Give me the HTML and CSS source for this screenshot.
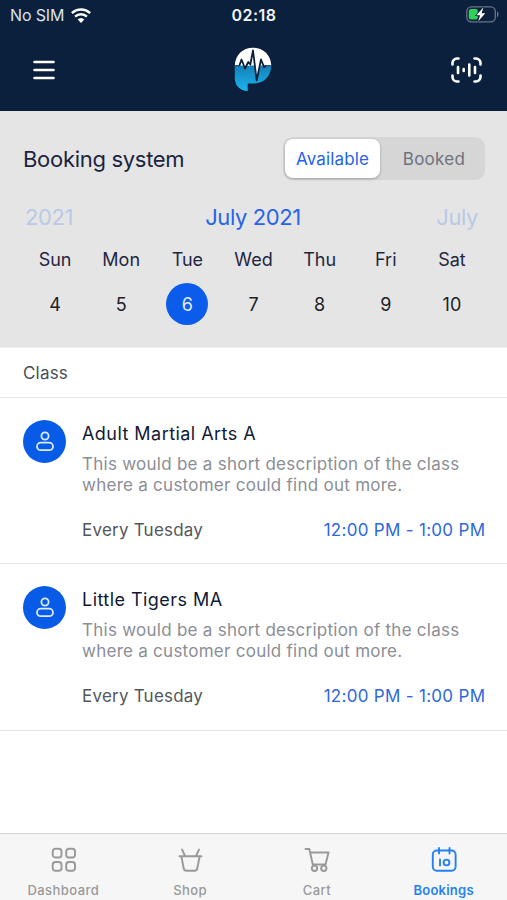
FILE: index.html
```html
<!DOCTYPE html>
<html lang="en">
<head>
<meta charset="utf-8">
<meta name="viewport" content="width=device-width, initial-scale=1">
<title>Booking system</title>
<link rel="stylesheet" href="styles.css">
</head>
<body>
<div class="app">
  <header class="header">
    <div class="status">
      <div class="carrier"><span>No SIM</span>
        <svg width="20" height="15" viewBox="0 0 20 15" fill="none" stroke="#fff" stroke-width="2.5"><path d="M.9 5.2a13 13 0 0 1 18.2 0M4.1 8.7a8.5 8.5 0 0 1 11.8 0"/><path d="M6.7 11.5a4.8 4.8 0 0 1 6.6 0L10 14.9z" fill="#fff" stroke="none"/></svg>
      </div>
      <span class="clock">02:18</span>
      <svg class="battery" width="33" height="17" viewBox="0 0 33 17"><rect x=".8" y=".8" width="28.5" height="15" rx="4.5" fill="none" stroke="#68768a" stroke-width="1.3"/><path d="M31 5.5c2 .8 2 5 0 5.800z" fill="#68768a"/><rect x="2.800" y="3" width="9" height="10.600" rx="2" fill="#30d158"/><path d="M17.500 1.300 10.400 9.300h3.700l-2 6.300 7.200-8.400h-3.700z" fill="#fff" stroke="#0a203c" stroke-width="1.400" paint-order="stroke"/></svg>
    </div>
    <div class="nav">
      <svg width="22" height="20" viewBox="0 0 22 20" stroke="#fff" stroke-width="2.600" stroke-linecap="round"><path d="M1.500 2h19M1.500 10h19M1.500 18h19"/></svg>
      <svg class="logo" width="38" height="44" viewBox="0 0 38 44"><defs><linearGradient id="g" x1="0" y1="0" x2="0" y2="1"><stop offset="0" stop-color="#1480b8"/><stop offset="1" stop-color="#1cb4f0"/></linearGradient></defs><path d="M.8 19C1 8 8.500.7 19 .7S37 8 37.300 19z" fill="#fff"/><path d="M.8 18.500h36.500C37 29.500 30 36.500 19 36.500h-5.300V44C6 43.500.8 39 .8 31z" fill="url(#g)"/><path d="M6 18 7.500 14 10.500 21.500 14 15.500l1.800 3zM19.800 16 22.900 33 27 17z" fill="#fff"/><path d="M5.300 18.700 7.500 12.500 11 21.500 14.300 15l2 2.500L19 3.500 22.700 33.500 27 12.500l3.200 7.800 1.600-1.700" fill="none" stroke="#0a203c" stroke-width="1.800" stroke-linejoin="round"/><path d="M.8 18.700H5.500M31.500 18.700h5.800" stroke="#0a203c" stroke-width=".8"/></svg>
      <svg width="31" height="26" viewBox="0 0 31 26" fill="none" stroke="#fff" stroke-width="2.600" stroke-linecap="round"><path d="M7.500 1.500H6A4.500 4.500 0 0 0 1.500 6v1.500M23.500 1.500H25A4.500 4.500 0 0 1 29.500 6v1.500M7.500 24.500H6A4.500 4.500 0 0 1 1.500 20v-1.500M23.500 24.500H25a4.500 4.500 0 0 0 4.500-4.500v-1.500M7 10v6M12.700 12v2M18.300 7.500v11M24 10v6"/></svg>
    </div>
  </header>

  <section class="calendar">
    <div class="heading">
      <h1>Booking system</h1>
      <div class="segment"><span class="seg on">Available</span><span class="seg">Booked</span></div>
    </div>
    <div class="months"><span class="dim">2021</span><span class="current">July 2021</span><span class="dim next">July</span></div>
    <div class="week">
      <span>Sun</span><span>Mon</span><span>Tue</span><span>Wed</span><span>Thu</span><span>Fri</span><span>Sat</span>
    </div>
    <div class="week dates">
      <span>4</span><span>5</span><span class="selected">6</span><span>7</span><span>8</span><span>9</span><span>10</span>
    </div>
  </section>

  <main class="classes">
    <h2>Class</h2>
    <article class="item">
      <div class="avatar"><svg width="18" height="20" viewBox="0 0 18 20" fill="none" stroke="#dcecff" stroke-width="1.800"><circle cx="9" cy="5" r="3.600"/><rect x="1" y="11.700" width="16" height="7.400" rx="3.700"/></svg></div>
      <div class="body">
        <h3>Adult Martial Arts A</h3>
        <p>This would be a short description of the class<br>where a customer could find out more.</p>
        <div class="when"><span>Every Tuesday</span><span class="time">12:00 PM - 1:00 PM</span></div>
      </div>
    </article>
    <article class="item">
      <div class="avatar"><svg width="18" height="20" viewBox="0 0 18 20" fill="none" stroke="#dcecff" stroke-width="1.800"><circle cx="9" cy="5" r="3.600"/><rect x="1" y="11.700" width="16" height="7.400" rx="3.700"/></svg></div>
      <div class="body">
        <h3>Little Tigers MA</h3>
        <p>This would be a short description of the class<br>where a customer could find out more.</p>
        <div class="when"><span>Every Tuesday</span><span class="time">12:00 PM - 1:00 PM</span></div>
      </div>
    </article>
  </main>

  <nav class="tabs">
    <div class="tab"><svg width="26" height="26" viewBox="0 0 26 26"><rect x="2.700" y="1.700" width="8.800" height="8.800" rx="2.800"/><rect x="16.200" y="1.700" width="8.800" height="8.800" rx="2.800"/><rect x="2.700" y="15" width="8.800" height="8.800" rx="2.800"/><rect x="16.200" y="15" width="8.800" height="8.800" rx="2.800"/></svg><span>Dashboard</span></div>
    <div class="tab"><svg width="26" height="26" viewBox="0 0 26 26"><path d="M2.500 9.300h22M4.300 9.300l2.400 12q.5 2.500 2.800 2.500h8q2.300 0 2.800-2.500l2.400-12M5 2.500l3 6.500M22 2.500 19 9"/></svg><span>Shop</span></div>
    <div class="tab"><svg width="26" height="26" viewBox="0 0 26 26"><path d="M1.500 2h3.800L8.800 17.500h12.700L24.500 5.500H7"/><circle cx="10.500" cy="21.300" r="2.700"/><circle cx="19.800" cy="21.300" r="2.700"/></svg><span>Cart</span></div>
    <div class="tab active"><svg width="26" height="26" viewBox="0 0 26 26"><rect x="1.800" y="3.500" width="22.800" height="20.300" rx="4"/><path d="M8 1v5.500M18.500 1v5.500M9 12.500v6"/><circle cx="15.500" cy="15.500" r="2.900"/></svg><span>Bookings</span></div>
  </nav>
</div>
</body>
</html>
```
FILE: styles.css
```css
* { box-sizing: border-box; }
body { margin: 0; background: #fff; font-family: Inter, "Liberation Sans", sans-serif; }
h1, h2, h3, p { margin: 0; font-weight: 400; }
svg { display: block; flex: none; }
.app { width: 507px; height: 900px; display: flex; flex-direction: column; overflow: hidden; }

.header { height: 111px; background: #0a203c; color: #f2f5f9; flex: none; }
.status { height: 30px; padding: 0 9px 0 10px; display: grid; grid-template-columns: 1fr auto 1fr; align-items: center; }
.carrier { display: flex; align-items: center; gap: 7px; font-size: 16px; letter-spacing: -.15px; color: #dce2ea; }
.clock { font-size: 16px; font-weight: 600; letter-spacing: .5px; }
.battery { justify-self: end; margin-top: -2px; margin-right: -1px; }
.nav { height: 80px; padding: 0 25px 0 33px; display: grid; grid-template-columns: 1fr auto 1fr; align-items: center; }
.nav > :last-child { justify-self: end; }
.logo { margin: -2px 9px 0 0; }

.calendar { height: 237px; background: #e5e5e5; padding: 26px 22px 0; flex: none; border-bottom: 1px solid #eee; }
.heading { display: flex; justify-content: space-between; align-items: center; height: 43px; }
h1 { padding-left: 1px; font-size: 22px; letter-spacing: -.3px; color: #1b2440; }
.segment { width: 202px; height: 43px; padding: 2px; display: flex; border-radius: 10px; background: #d6d6d6; }
.seg { flex: 1; display: flex; align-items: center; justify-content: center; padding-left: 5px; font-size: 17px; color: #6d737d; letter-spacing: .3px; }
.seg.on { flex: 0 0 95px; padding-left: 0; background: #fff; border-radius: 8px; color: #2563eb; box-shadow: 0 1px 3px #0004; letter-spacing: .15px; }
.months { display: grid; grid-template-columns: 1fr auto 1fr; margin-top: 22px; padding: 0 7px 0 3px; height: 30px; line-height: 30px; font-size: 22px; letter-spacing: -.4px; }
.dim { color: #bac9e5; }
.next { text-align: right; }
.current { color: #2563eb; margin-left: 3px; }
.week { display: grid; grid-template-columns: repeat(7, 66.15px); height: 30px; margin-top: 13px; line-height: 30px; text-align: center; font-size: 18px; color: #1f2741; }
.dates { height: 42px; margin-top: 8px; line-height: 43px; color: #202124; }
.selected { width: 42px; height: 42px; border-radius: 50%; background: #0b5cea; color: #e3efff; justify-self: center; }

.classes { flex: 1; }
h2 { height: 50px; padding-left: 23px; line-height: 50px; font-size: 17px; letter-spacing: .2px; color: #4b4e54; border-bottom: 1px solid #e5e6e7; }
.item { height: 166.300px; padding: 22px 22px 0 23px; display: flex; gap: 16px; border-bottom: 1px solid #e2e4e6; }
.avatar { width: 43px; height: 43px; margin-top: -.5px; border-radius: 50%; background: #075be6; display: flex; align-items: center; justify-content: center; flex: none; }
.body { flex: 1; }
h3 { font-size: 18px; line-height: 28px; color: #111936; letter-spacing: .45px; }
p { margin-top: 6px; font-size: 17px; line-height: 21px; letter-spacing: .26px; color: #8b8e95; white-space: nowrap; }
.when { margin-top: 23px; display: flex; justify-content: space-between; font-size: 17px; line-height: 22px; letter-spacing: .22px; color: #54575c; }
.time { color: #2d68dd; letter-spacing: .3px; margin-right: -.3px; }

.tabs { height: 67px; padding-top: 13px; display: flex; background: #f6f6f6; border-top: 1px solid #d5d5d6; flex: none; }
.tab { flex: 1; display: flex; flex-direction: column; align-items: center; color: #999; font-size: 13px; font-weight: 500; line-height: 18px; gap: 8px; letter-spacing: .45px; }
.tab svg { fill: none; stroke: currentColor; stroke-width: 1.900; stroke-linecap: round; stroke-linejoin: round; }
.active { color: #2581f1; font-weight: 600; letter-spacing: .25px; }
```
